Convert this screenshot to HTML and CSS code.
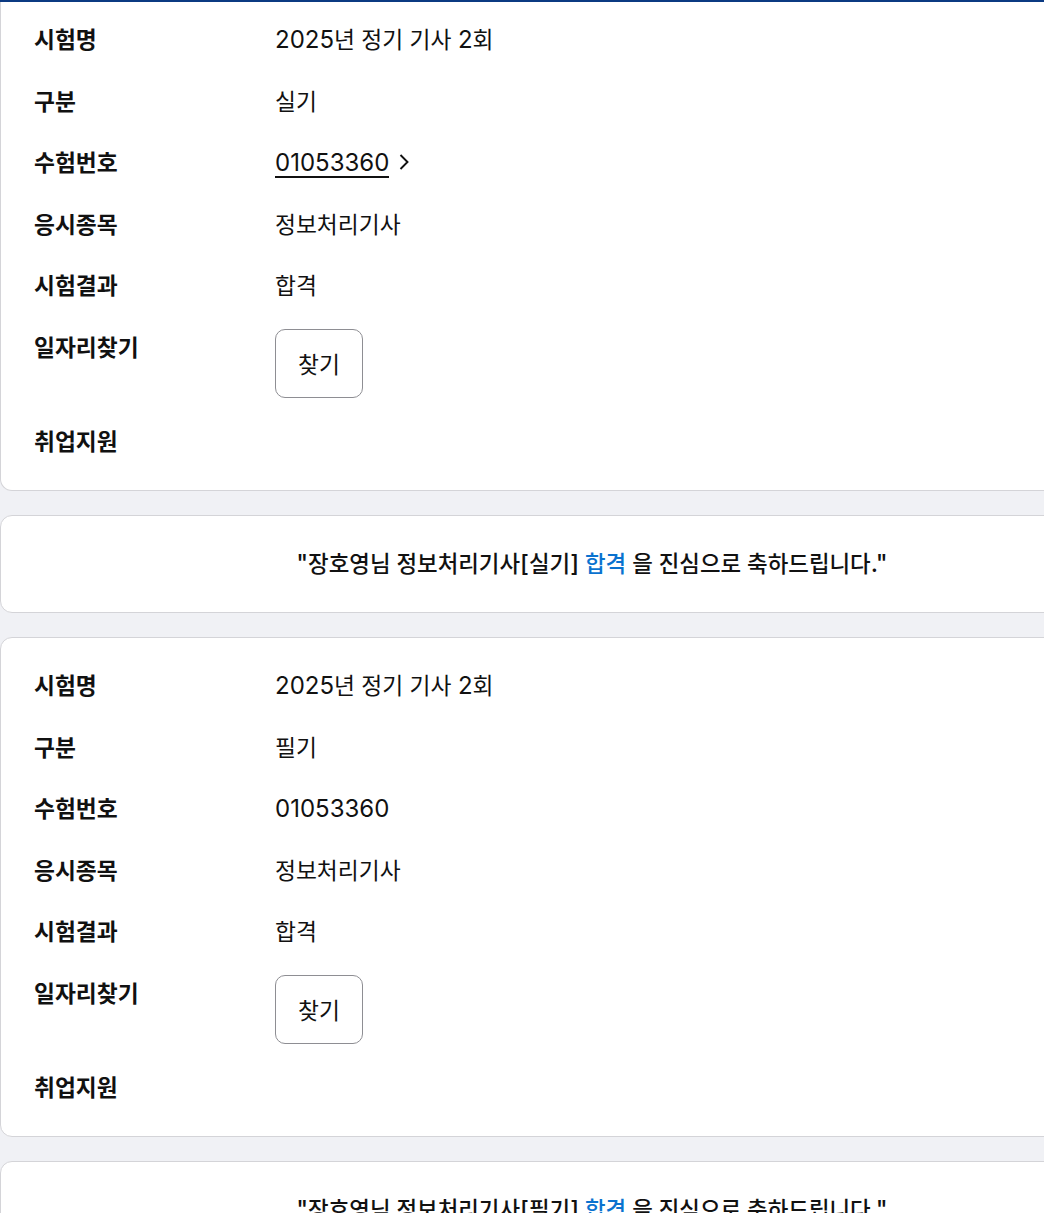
FILE: index.html
```html
<!DOCTYPE html>
<html lang="ko">
<head>
<meta charset="utf-8">
<title>시험 결과</title>
<link rel="stylesheet" href="styles.css">
</head>
<body>
<div class="topline"></div>
<main class="list">
  <section class="card card--first">
    <dl class="info">
      <div class="row"><dt>시험명</dt><dd><span class="lat">2025</span>년 정기 기사 <span class="lat">2</span>회</dd></div>
      <div class="row"><dt>구분</dt><dd>실기</dd></div>
      <div class="row"><dt>수험번호</dt><dd><a class="num-link" href="#"><span class="num lat">01053360</span><svg class="chev" width="12" height="18" viewBox="0 0 12 18"><path d="M2.5 2 L9.5 9 L2.5 16" fill="none" stroke="#111" stroke-width="1.9"/></svg></a></dd></div>
      <div class="row"><dt>응시종목</dt><dd>정보처리기사</dd></div>
      <div class="row"><dt>시험결과</dt><dd>합격</dd></div>
      <div class="row row--btn"><dt>일자리찾기</dt><dd><button class="btn" type="button">찾기</button></dd></div>
      <div class="row"><dt>취업지원</dt><dd></dd></div>
    </dl>
  </section>
  <section class="card card--msg">
    <p class="msg"><span class="lat">"</span>장호영님 정보처리기사<span class="lat">[</span>실기<span class="lat">]</span> <span class="pass">합격</span> 을 진심으로 축하드립니다<span class="lat">."</span></p>
  </section>
  <section class="card">
    <dl class="info">
      <div class="row"><dt>시험명</dt><dd><span class="lat">2025</span>년 정기 기사 <span class="lat">2</span>회</dd></div>
      <div class="row"><dt>구분</dt><dd>필기</dd></div>
      <div class="row"><dt>수험번호</dt><dd><span class="lat">01053360</span></dd></div>
      <div class="row"><dt>응시종목</dt><dd>정보처리기사</dd></div>
      <div class="row"><dt>시험결과</dt><dd>합격</dd></div>
      <div class="row row--btn"><dt>일자리찾기</dt><dd><button class="btn" type="button">찾기</button></dd></div>
      <div class="row"><dt>취업지원</dt><dd></dd></div>
    </dl>
  </section>
  <section class="card card--msg">
    <p class="msg"><span class="lat">"</span>장호영님 정보처리기사<span class="lat">[</span>필기<span class="lat">]</span> <span class="pass">합격</span> 을 진심으로 축하드립니다<span class="lat">."</span></p>
  </section>
</main>
</body>
</html>
```
FILE: styles.css
```css
html, body {
  margin: 0;
  padding: 0;
}
body {
  background: #f0f1f5;
  font-family: Inter, "Noto Sans CJK KR", sans-serif;
  color: #111;
  overflow: hidden;
  width: 1044px;
}
.topline {
  height: 2px;
  background: #0b3a82;
}
.list {
  width: 1184px;
  display: flex;
  flex-direction: column;
  gap: 24px;
}
.card {
  background: #fff;
  border: 1px solid #d4d4d8;
  border-radius: 12px;
  padding: 17px 33px 18px;
}
.card--first {
  border-top: 0;
  border-top-left-radius: 0;
  border-top-right-radius: 0;
  padding-top: 7px;
}
.info {
  margin: 0;
}
.row {
  display: grid;
  grid-template-columns: 241px 1fr;
  font-size: 22.75px;
  line-height: 30px;
}
.row dt {
  font-weight: 700;
  padding: 16px 0 15.5px;
}
.row dd {
  margin: 0;
  padding: 16px 0 15.5px;
}
.row--btn dd {
  padding: 12px 0 13px;
}
.lat {
  font-size: 24px;
  line-height: 1;
}
.num-link {
  color: #111;
  text-decoration: none;
  display: inline-flex;
  align-items: center;
  gap: 9px;
}
.num {
  border-bottom: 2px solid #111;
  line-height: 27px;
  padding-top: 1px;
}
.chev {
  display: block;
  margin-top: -2px;
}
.btn {
  width: 88px;
  height: 69px;
  border: 1px solid #8e8e93;
  border-radius: 10px;
  background: #fff;
  font-family: inherit;
  font-size: 22.75px;
  color: #111;
  padding: 0;
}
.card--msg {
  padding: 33px 34px;
}
.msg {
  margin: 0;
  text-align: center;
  font-size: 22.4px;
  line-height: 30px;
  font-weight: 500;
}
.pass {
  color: #0a72cf;
}
```
